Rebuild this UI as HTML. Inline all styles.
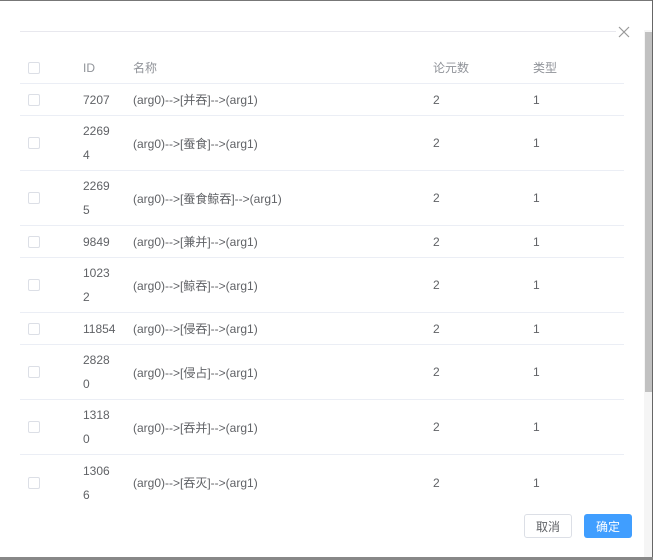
<!DOCTYPE html>
<html><head><meta charset="utf-8"><style>
*{margin:0;padding:0;box-sizing:border-box}
body{width:653px;height:560px;overflow:hidden;background:#fff;position:relative;font-family:"Liberation Sans","Noto Sans CJK SC",sans-serif;font-size:12px;color:#606266}
.top{position:absolute;left:0;top:0;width:653px;height:1px;background:#777}
.right{position:absolute;right:0;top:0;width:1px;height:560px;background:#666}
.bot{position:absolute;left:0;top:557px;width:653px;height:3px;background:#888}
.hl{position:absolute;left:20px;top:31px;width:596px;height:1px;background:#e8e8ee}
.x{position:absolute;left:617px;top:24px;}
.track{position:absolute;left:644px;top:30px;width:8px;height:527px;background:#f5f5f5}
.thumb{position:absolute;left:645px;top:32px;width:7px;height:360px;background:#c1c1c1}
.row{position:absolute;left:20px;width:604px;border-bottom:1px solid #ebeef5}
.row div{position:absolute;top:0;height:100%;display:flex;align-items:center}
.cb{left:8px;width:12px}
.cb span{display:block;width:12px;height:12px;border:1px solid #dcdfe6;border-radius:2px}
.id{left:63px;width:50px;line-height:24px}
.nm{left:113px}
.n{left:413px}
.t{left:513px}
.h div{color:#909399}
.btn{position:absolute;top:514px;width:48px;height:24px;border-radius:3px;font-size:12px;display:flex;align-items:center;justify-content:center}
</style></head><body>
<div class="top"></div><div class="right"></div><div class="bot"></div>
<div class="hl"></div>
<svg class="x" width="14" height="14" viewBox="0 0 14 14"><path d="M2 3L12 13M12 3L2 13" stroke="#999" stroke-width="1.2"/></svg>
<div class="track"></div><div class="thumb"></div>
<div class="row h" style="top:52px;height:32px"><div class="cb"><span></span></div><div class="id">ID</div><div class="nm">名称</div><div class="n">论元数</div><div class="t">类型</div></div>
<div class="row" style="top:84px;height:32px"><div class="cb"><span></span></div><div class="id">7207</div><div class="nm">(arg0)--&gt;[并吞]--&gt;(arg1)</div><div class="n">2</div><div class="t">1</div></div>
<div class="row" style="top:116px;height:55px"><div class="cb"><span></span></div><div class="id">2269<br>4</div><div class="nm">(arg0)--&gt;[蚕食]--&gt;(arg1)</div><div class="n">2</div><div class="t">1</div></div>
<div class="row" style="top:171px;height:55px"><div class="cb"><span></span></div><div class="id">2269<br>5</div><div class="nm">(arg0)--&gt;[蚕食鲸吞]--&gt;(arg1)</div><div class="n">2</div><div class="t">1</div></div>
<div class="row" style="top:226px;height:32px"><div class="cb"><span></span></div><div class="id">9849</div><div class="nm">(arg0)--&gt;[兼并]--&gt;(arg1)</div><div class="n">2</div><div class="t">1</div></div>
<div class="row" style="top:258px;height:55px"><div class="cb"><span></span></div><div class="id">1023<br>2</div><div class="nm">(arg0)--&gt;[鲸吞]--&gt;(arg1)</div><div class="n">2</div><div class="t">1</div></div>
<div class="row" style="top:313px;height:32px"><div class="cb"><span></span></div><div class="id">11854</div><div class="nm">(arg0)--&gt;[侵吞]--&gt;(arg1)</div><div class="n">2</div><div class="t">1</div></div>
<div class="row" style="top:345px;height:55px"><div class="cb"><span></span></div><div class="id">2828<br>0</div><div class="nm">(arg0)--&gt;[侵占]--&gt;(arg1)</div><div class="n">2</div><div class="t">1</div></div>
<div class="row" style="top:400px;height:55px"><div class="cb"><span></span></div><div class="id">1318<br>0</div><div class="nm">(arg0)--&gt;[吞并]--&gt;(arg1)</div><div class="n">2</div><div class="t">1</div></div>
<div class="row" style="top:455px;height:55px;border:none"><div class="cb"><span></span></div><div class="id">1306<br>6</div><div class="nm">(arg0)--&gt;[吞灭]--&gt;(arg1)</div><div class="n">2</div><div class="t">1</div></div>
<div style="position:absolute;left:0;top:500px;width:644px;height:57px;background:#fff"></div>
<div class="btn" style="left:524px;border:1px solid #dcdfe6;color:#606266;background:#fff">取消</div>
<div class="btn" style="left:584px;background:#409eff;color:#fff">确定</div>
</body></html>
